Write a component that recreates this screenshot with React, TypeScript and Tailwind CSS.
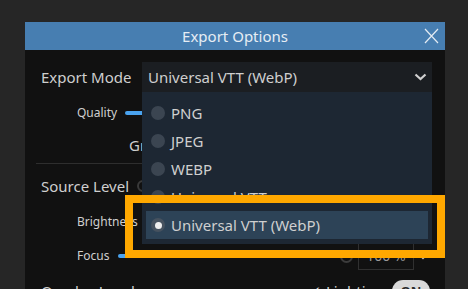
import React from "react";

const items = ["PNG", "JPEG", "WEBP", "Universal VTT"];

export default function App() {
  return (
    <div className="relative w-[468px] h-[289px] overflow-hidden bg-[#262626] pl-[25px] pt-[22px] font-['Noto_Sans',sans-serif] text-[#cfcfcf]">
      <div className="relative w-[420px] h-[300px] bg-[#111111]">
        {/* title bar */}
        <div className="relative h-[28px] bg-[#477eb1] flex items-center justify-center">
          <span className="text-[15px] text-[#e6edf4] leading-none">Export Options</span>
          <svg className="absolute left-[399px] top-[6px]" width="15" height="16" viewBox="0 0 15 16">
            <path d="M1 1 L14 15 M14 1 L1 15" stroke="#e3ebf3" strokeWidth="1.2" fill="none" />
          </svg>
        </div>
        {/* body */}
        <div className="pl-[16px] pr-[13px] flex flex-col">
          {/* Export mode row */}
          <div className="mt-[12px] h-[30px] flex items-center">
            <span className="w-[101px] text-[15px] leading-none">Export Mode</span>
            <div className="flex-1 h-full bg-[#1b1e22] flex items-center pl-[6px] pr-[5px]">
              <span className="flex-1 text-[15px] leading-none">Universal VTT (WebP)</span>
              <svg width="13" height="8" viewBox="0 0 13 8">
                <path d="M1.5 1.5 L6.5 6 L11.5 1.5" stroke="#d0d0d0" strokeWidth="2.2" fill="none" />
              </svg>
            </div>
          </div>
          {/* Quality */}
          <div className="mt-[7px] h-[28px] flex items-center pl-[36px] gap-[8px]">
            <span className="text-[12px] leading-none">Quality</span>
            <div className="w-[200px] h-[4px] rounded-full bg-[#4aa3ef]" />
          </div>
          {/* G heading */}
          <div className="mt-[4px] h-[28px] flex items-center pl-[88px]">
            <span className="text-[15px] leading-none">Grid Settings</span>
          </div>
          {/* divider */}
          <div className="mt-[4px] ml-[-5px] h-px bg-[#2e2e2e]" />
          {/* Source level */}
          <div className="mt-[8px] h-[28px] flex items-center">
            <span className="text-[15px] leading-none">Source Level</span>
            <div className="ml-[8px] w-[12px] h-[12px] rounded-full border-2 border-[#3a3a3a]" />
          </div>
          {/* Brightness */}
          <div className="mt-[8px] h-[28px] flex items-center pl-[36px]">
            <span className="text-[12px] leading-none">Brightness</span>
          </div>
          {/* Focus */}
          <div className="mt-[6px] h-[28px] flex items-center pl-[36px]">
            <span className="text-[12px] leading-none">Focus</span>
            <div className="ml-[9px] w-[200px] h-[4px] rounded-full bg-[#4aa3ef]" />
            <div className="flex-1" />
            <div className="w-[13px] h-[13px] rounded-full border-2 border-[#3c3c3c]" />
            <div className="ml-[5px] w-[56px] h-[28px] border border-[#303030] flex items-center justify-center text-[14px] leading-none text-[#9a9a9a]">
              100 %
            </div>
            <svg className="ml-[4px] mr-[4px]" width="10" height="7" viewBox="0 0 10 7">
              <path d="M1 1 L5 5 L9 1" stroke="#bdbdbd" strokeWidth="2" fill="none" />
            </svg>
          </div>
          {/* Overlay level */}
          <div className="mt-[7px] h-[28px] flex items-center">
            <span className="text-[15px] leading-none">Overlay Level</span>
            <div className="flex-1" />
            <span className="text-[15px] leading-none">✓ Lighting</span>
            <div className="ml-[8px] mr-[2px] w-[38px] h-[22px] rounded-full bg-[#d9d9d9] flex items-center justify-center text-[13px] font-bold text-[#2a2a2a] leading-none">
              ON
            </div>
          </div>
        </div>

        {/* dropdown menu */}
        <div className="absolute left-[117px] top-[70px] w-[290px] h-[152px] bg-[#1d2733] pt-[7px] px-[4px] flex flex-col">
          {items.map((it) => (
            <div key={it} className="h-[28px] flex items-center pl-[5px]">
              <div className="w-[14px] h-[14px] rounded-full bg-[#3b4551]" />
              <span className="ml-[6px] text-[15px] leading-none">{it}</span>
            </div>
          ))}
          <div className="h-[28px] flex items-center pl-[5px] bg-[#2d4357]">
            <div className="w-[14px] h-[14px] rounded-full bg-[#46525f] flex items-center justify-center">
              <div className="w-[7px] h-[7px] rounded-full bg-[#eeeeee]" />
            </div>
            <span className="ml-[6px] text-[15px] leading-none">Universal VTT (WebP)</span>
          </div>
        </div>
      </div>

      {/* highlight frame */}
      <div className="absolute left-[125px] top-[195px] w-[320px] h-[63px] border-[8px] border-[#ffa800]" />
    </div>
  );
}
